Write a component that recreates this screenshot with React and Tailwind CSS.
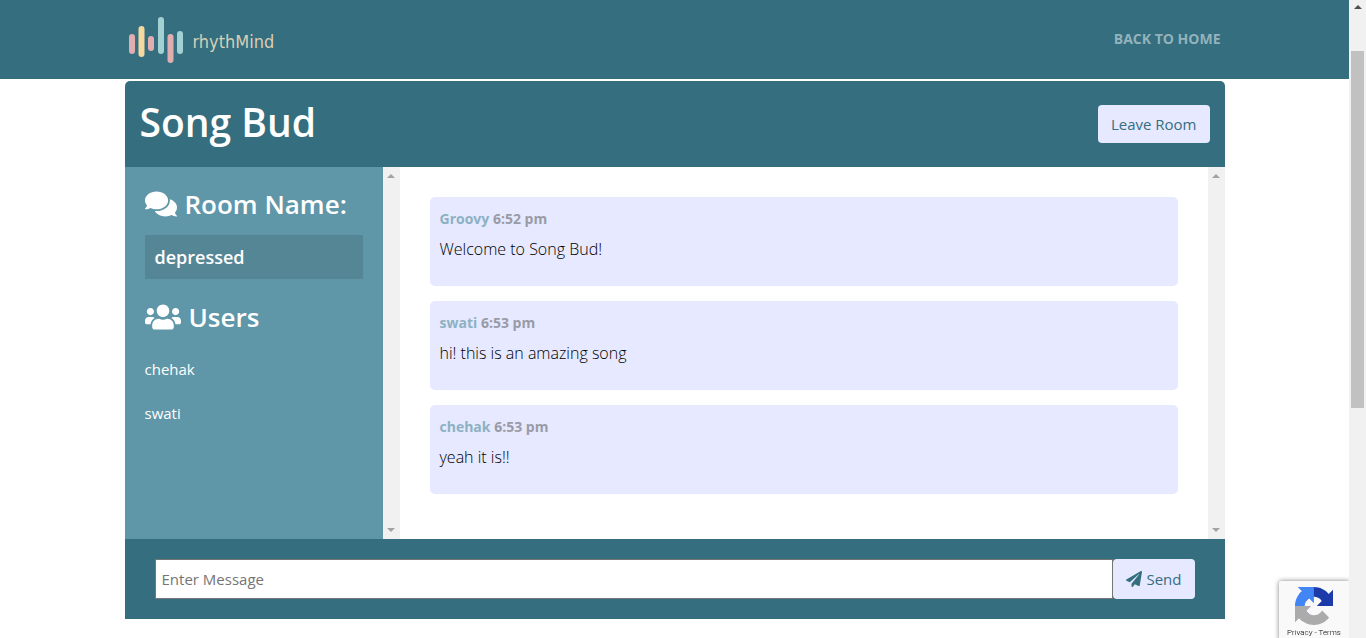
import React, { useState } from "react";
import { FaComments, FaUsers, FaPaperPlane } from "react-icons/fa";

const users = ["chehak", "swati"];

const firstMessages = [
  { name: "Groovy", time: "6:52 pm", text: "Welcome to Song Bud!" },
  { name: "swati", time: "6:53 pm", text: "hi! this is an amazing song" },
  { name: "chehak", time: "6:53 pm", text: "yeah it is!!" },
];

function Logo() {
  return (
    <a href="#" className="flex items-center gap-2 text-[#d9cfb4]">
      <svg width="56" height="48" viewBox="0 0 56 48" aria-hidden="true">
        <rect x="0" y="18" width="6" height="20" rx="3" fill="#e0aeb0" />
        <rect x="9.5" y="10" width="6" height="31" rx="3" fill="#f3d9a0" />
        <rect x="19" y="20" width="6" height="15" rx="3" fill="#e0aeb0" />
        <rect x="29" y="1" width="6" height="37" rx="3" fill="#a3d0d3" />
        <rect x="38.5" y="18" width="6" height="29" rx="3" fill="#e0aeb0" />
        <rect x="48" y="15" width="6" height="23" rx="3" fill="#a3d0d3" />
      </svg>
      <span className="pt-1 font-['Liberation_Sans_Narrow','DejaVu_Sans_Condensed',sans-serif] text-lg">rhythMind</span>
    </a>
  );
}

function Arrow({ down, className }) {
  return (
    <svg width="8" height="4" viewBox="0 0 8 4" className={className} aria-hidden="true">
      <path d={down ? "M0 0h8L4 4z" : "M0 4h8L4 0z"} fill="currentColor" />
    </svg>
  );
}

// Track shown next to a panel that has nothing to scroll
function ScrollTrack() {
  return (
    <div className="flex w-[17px] shrink-0 flex-col items-center justify-between bg-[#f1f1f1] py-[7px] text-[#a3a3a3]">
      <Arrow />
      <Arrow down />
    </div>
  );
}

function Recaptcha() {
  return (
    <div className="fixed -bottom-[3px] right-[17px] flex h-[60px] w-[70px] flex-col items-center rounded-l-xs bg-[#f9f9f9] pt-1.5 shadow-[0_0_5px_gray] [clip-path:inset(-6px_0_0_-6px)]">
      <svg width="38" height="38" viewBox="0 0 64 64" className="shrink-0" aria-hidden="true">
        <path d="M64 31.955l-.014-1.37V4.687l-7.16 7.16C50.966 4.674 42.052.094 32.068.094c-10.39 0-19.622 4.96-25.458 12.64l11.736 11.86a15.55 15.55 0 0 1 4.754-5.334c2.05-1.6 4.952-2.906 8.968-2.906.485 0 .86.057 1.135.163 4.976.393 9.288 3.14 11.828 7.124l-8.307 8.307L64 31.953" fill="#1c3aa9" />
        <path d="M31.862.094l-1.37.014H4.594l7.16 7.16C4.58 13.127 0 22.04 0 32.025c0 10.39 4.96 19.622 12.64 25.458L24.5 45.747a15.55 15.55 0 0 1-5.334-4.754c-1.6-2.05-2.906-4.952-2.906-8.968 0-.485.057-.86.163-1.135.393-4.976 3.14-9.288 7.124-11.828l8.307 8.307L31.86.095" fill="#4285f4" />
        <path d="M0 32.033l.014 1.37v25.898l7.16-7.16c5.86 7.173 14.774 11.753 24.758 11.753 10.39 0 19.622-4.96 25.458-12.64L45.654 39.395a15.55 15.55 0 0 1-4.754 5.334c-2.05 1.6-4.952 2.906-8.968 2.906-.485 0-.86-.057-1.135-.163-4.976-.393-9.288-3.14-11.828-7.124l8.307-8.307c-10.522.04-22.4.066-27.295-.005" fill="#ababab" />
      </svg>
      <div className="mt-0.5 font-[Roboto,sans-serif] text-[8px] leading-3 font-light text-black">
        <a href="#privacy">Privacy</a> - <a href="#terms">Terms</a>
      </div>
    </div>
  );
}

function App() {
  const [messages, setMessages] = useState(firstMessages);
  const [msg, setMsg] = useState("");

  const handleSubmit = (e) => {
    e.preventDefault();
    if (!msg.trim()) return;
    setMessages([...messages, { name: "chehak", time: "6:54 pm", text: msg }]);
    setMsg("");
  };

  return (
    <div className="flex min-h-screen bg-white font-['Open_Sans','Noto_Sans',sans-serif] text-base text-[#212529]">
      <div className="min-w-0 flex-1">
        <nav className="bg-[#346e7f]">
          <div className="mx-auto flex h-[79px] max-w-[1100px] items-center justify-between px-1">
            <Logo />
            <a href="#home" className="pb-0.5 text-sm font-bold text-[#93b2bb]">BACK TO HOME</a>
          </div>
        </nav>

        <div className="mx-auto mt-0.5 max-w-[1100px]">
          <header className="flex h-[86px] items-center justify-between rounded-t-[5px] bg-[#346e7f] px-[15px]">
            <h1 className="pb-1 text-[39px] leading-[48px] font-semibold text-white">Song Bud</h1>
            <button type="button" className="h-[38px] rounded bg-[#e6e9ff] px-[13px] text-[15px] text-[#346e7f]">
              Leave Room
            </button>
          </header>

          <main className="grid grid-cols-[1fr_3fr]">
            <div className="flex bg-[#5f96a8] text-white">
              <div className="flex-1 p-5">
                <h3 className="mb-3.5 flex items-center gap-2 text-[26px] leading-[34px] font-semibold whitespace-nowrap">
                  <FaComments className="size-8 shrink-0" /> Room Name:
                </h3>
                <h2 className="mb-5 bg-black/10 p-2.5 text-lg leading-6 font-semibold">depressed</h2>
                <h3 className="mb-3 flex items-center gap-2 text-[26px] leading-[34px] font-semibold">
                  <FaUsers className="size-9 shrink-0" /> Users
                </h3>
                <ul>
                  {users.map((user) => (
                    <li key={user} className="py-2.5 text-[15px] leading-6">{user}</li>
                  ))}
                </ul>
              </div>
              <ScrollTrack />
            </div>

            <div className="flex">
              <div className="flex-1 p-[30px]">
                {messages.map((message, i) => (
                  <div key={i} className="mb-[15px] rounded-[5px] bg-[#e6e9ff] px-2.5 pt-2.5 pb-[25px]">
                    <p className="mb-1.5 text-sm leading-6 font-bold text-[#8db1c3]">
                      {message.name} <span className="text-[#999ba7]">{message.time}</span>
                    </p>
                    <p className="text-base leading-6 font-light text-black">{message.text}</p>
                  </div>
                ))}
              </div>
              <ScrollTrack />
            </div>
          </main>

          <div className="bg-[#346e7f] px-[30px] py-5">
            <form onSubmit={handleSubmit} className="flex">
              <input
                type="text"
                aria-label="Enter Message"
                placeholder="Enter Message"
                value={msg}
                onChange={(e) => setMsg(e.target.value)}
                className="h-10 min-w-0 flex-1 border border-[#767676] bg-white px-1.5 text-[15px] placeholder:text-[#757575]"
              />
              <button type="submit" className="flex items-center gap-1 rounded bg-[#e6e9ff] px-[13px] text-[15px] text-[#346e7f]">
                <FaPaperPlane className="size-4" /> Send
              </button>
            </form>
          </div>
        </div>
      </div>

      <div className="sticky top-0 h-screen w-[17px] shrink-0 bg-[#f1f1f1] text-[#505050]">
        <Arrow className="mx-auto mt-[5px]" />
        <div className="mx-0.5 mt-[42px] h-[56%] bg-[#c1c1c1]"></div>
      </div>
      <Recaptcha />
    </div>
  );
}

export default App;
